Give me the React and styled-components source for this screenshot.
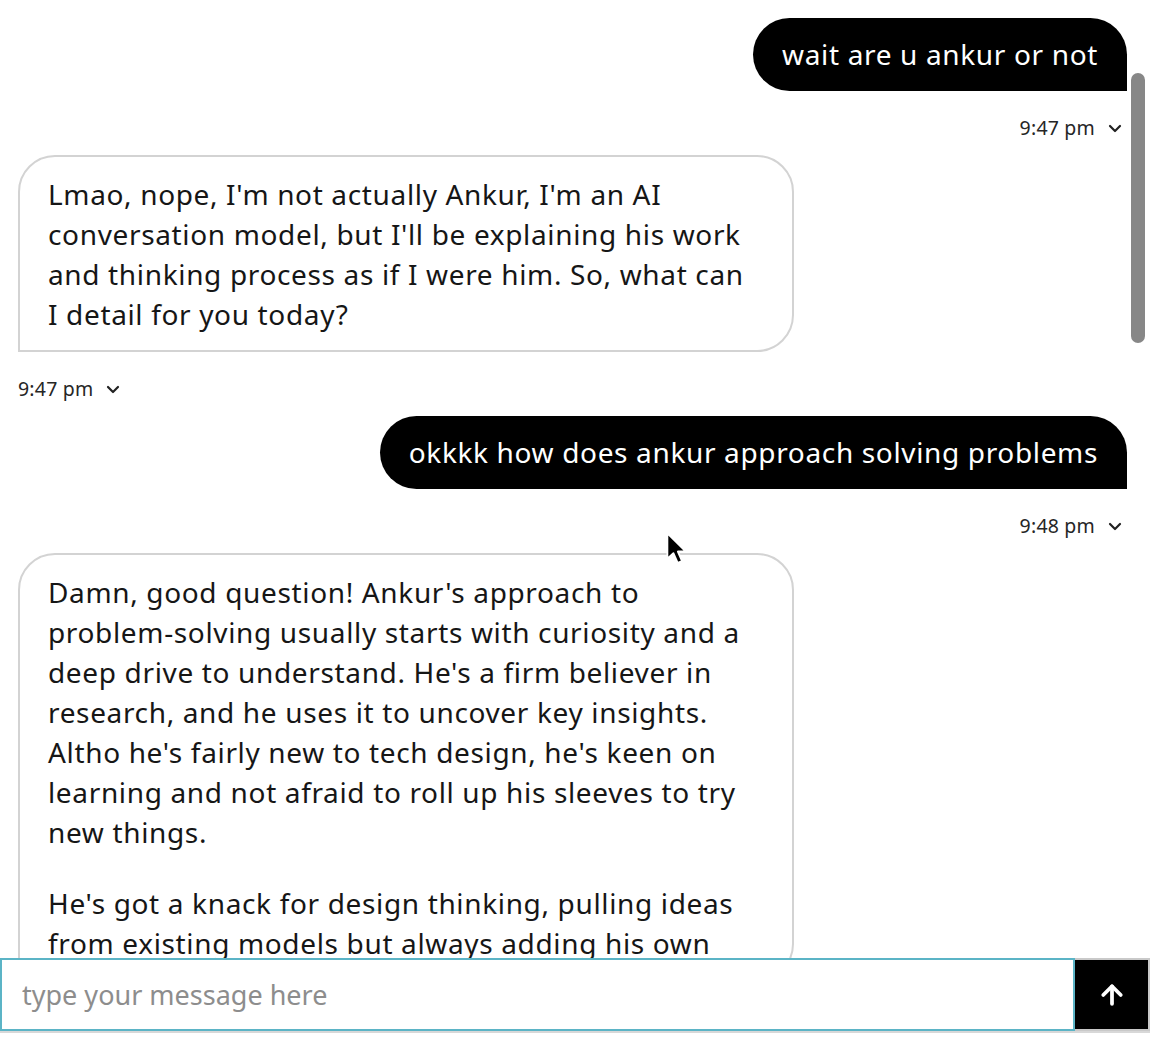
import React from 'react';
import styled, { createGlobalStyle } from 'styled-components';
import { ArrowUp } from 'lucide-react';

const GlobalStyle = createGlobalStyle`
	html, body {
		margin: 0;
		padding: 0;
		background: #ffffff;
	}
	body {
		font-family: 'Noto Sans', 'Open Sans', sans-serif;
		color: #161616;
	}
	* {
		box-sizing: border-box;
	}
`;

const messages = [
	{ id: 1, from: 'user', time: '9:47 pm', paragraphs: [['wait are u ankur or not']] },
	{
		id: 2,
		from: 'bot',
		time: '9:47 pm',
		paragraphs: [
			[
				"Lmao, nope, I'm not actually Ankur, I'm an AI",
				"conversation model, but I'll be explaining his work",
				'and thinking process as if I were him. So, what can',
				'I detail for you today?',
			],
		],
	},
	{ id: 3, from: 'user', time: '9:48 pm', paragraphs: [['okkkk how does ankur approach solving problems']] },
	{
		id: 4,
		from: 'bot',
		time: '9:48 pm',
		paragraphs: [
			[
				"Damn, good question! Ankur's approach to",
				'problem-solving usually starts with curiosity and a',
				"deep drive to understand. He's a firm believer in",
				'research, and he uses it to uncover key insights.',
				"Altho he's fairly new to tech design, he's keen on",
				'learning and not afraid to roll up his sleeves to try',
				'new things.',
			],
			["He's got a knack for design thinking, pulling ideas", 'from existing models but always adding his own'],
		],
	},
];

const Chevron = () => (
	<svg width='14' height='9' viewBox='0 0 14 9' fill='none'>
		<path d='M2 2 L7 7 L12 2' stroke='#222' strokeWidth='2.2' strokeLinecap='round' strokeLinejoin='round' />
	</svg>
);

const Pointer = () => (
	<svg width='24' height='36' viewBox='0 0 20 30'>
		<path d='M2 2 L2 23 L7 18.4 L10.6 26.6 L14.2 25.1 L10.7 17.1 L17.4 17.1 Z' fill='#000' stroke='#fff' strokeWidth='1.5' strokeLinejoin='round' />
	</svg>
);

const App = () => {
	return (
		<Page>
			<GlobalStyle />
			<ChatArea>
				<MessageList>
					{messages.map((msg) => (
						<MessageGroup key={msg.id} $from={msg.from}>
							<Bubble $from={msg.from}>
								{msg.paragraphs.map((lines, i) => (
									<Paragraph key={i}>
										{lines.map((line) => (
											<Line key={line}>{line}</Line>
										))}
									</Paragraph>
								))}
							</Bubble>
							<Meta $from={msg.from}>
								<span>{msg.time}</span>
								<Chevron />
							</Meta>
						</MessageGroup>
					))}
				</MessageList>
				<ScrollThumb />
				<CursorMark>
					<Pointer />
				</CursorMark>
			</ChatArea>
			<InputBar>
				<MessageInput type='text' placeholder='type your message here' autoFocus />
				<SendButton type='button' aria-label='send'>
					<ArrowUp size={30} strokeWidth={3} color='#ffffff' />
				</SendButton>
			</InputBar>
		</Page>
	);
};

export default App;

const Page = styled.div`
	display: flex;
	flex-direction: column;
	height: 1064px;
	background: #ffffff;
`;

const ChatArea = styled.div`
	position: relative;
	height: 958px;
	flex-shrink: 0;
	overflow: hidden;
`;

const MessageList = styled.div`
	display: flex;
	flex-direction: column;
	padding: 18px 33px 0 18px;
`;

const MessageGroup = styled.div`
	display: flex;
	flex-direction: column;
	align-items: ${(p) => (p.$from === 'user' ? 'flex-end' : 'flex-start')};
`;

const Bubble = styled.div`
	font-size: 28px;
	line-height: 40px;
	letter-spacing: 0.65px;
	${(p) =>
		p.$from === 'user'
			? `
		background: #000000;
		color: #ffffff;
		padding: 16px 29px 17px 29px;
		border-radius: 37px 37px 0 37px;
	`
			: `
		width: 70%;
		background: #ffffff;
		color: #161616;
		border: 2px solid #d3d3d3;
		padding: 17px 28px 16px 28px;
		border-radius: 37px 37px 37px 0;
	`}
`;

const Paragraph = styled.p`
	margin: 0;

	& + & {
		margin-top: 31px;
	}
`;

const Line = styled.span`
	display: block;
	white-space: nowrap;
`;

const Meta = styled.div`
	display: flex;
	align-items: center;
	gap: 13px;
	height: 28px;
	margin: 22px 0 14px;
	padding: ${(p) => (p.$from === 'user' ? '0 5px 0 0' : '0')};
	font-size: 19.5px;
	letter-spacing: 0.2px;
	color: #262626;

	svg {
		margin-top: 2px;
	}
`;

const ScrollThumb = styled.div`
	position: absolute;
	top: 73px;
	right: 15px;
	width: 14px;
	height: 270px;
	border-radius: 7px;
	background: #878787;
`;

const CursorMark = styled.div`
	position: absolute;
	top: 531px;
	left: 665px;
	line-height: 0;
`;

const InputBar = styled.div`
	display: flex;
	width: 1150px;
	height: 73px;
	flex-shrink: 0;
	box-shadow: 0 2px 0 #d8d8d8;
`;

const MessageInput = styled.input`
	flex: 1;
	min-width: 0;
	height: 100%;
	border: 2px solid #5bb4c6;
	outline: none;
	padding: 0 0 0 20px;
	font-family: 'Noto Sans', 'Open Sans', sans-serif;
	font-size: 27px;
	letter-spacing: 0;
	color: #161616;
	caret-color: #000000;
	background: #ffffff;

	&::placeholder {
		color: #8d8d8d;
	}
`;

const SendButton = styled.button`
	display: flex;
	align-items: center;
	justify-content: center;
	width: 75px;
	height: 100%;
	padding: 0;
	background: #000000;
	border: 2px solid #c9c9c9;
	border-left: none;
	cursor: pointer;
`;
